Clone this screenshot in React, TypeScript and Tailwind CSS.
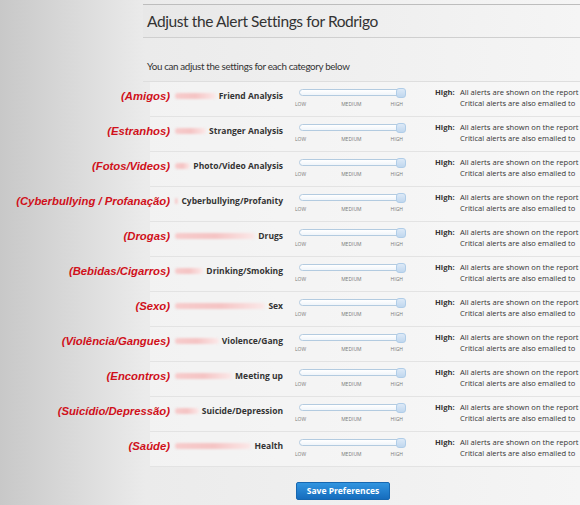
import React from "react";

const rows: [string, string][] = [
  ["(Amigos)", "Friend Analysis"],
  ["(Estranhos)", "Stranger Analysis"],
  ["(Fotos/Videos)", "Photo/Video Analysis"],
  ["(Cyberbullying / Profanação)", "Cyberbullying/Profanity"],
  ["(Drogas)", "Drugs"],
  ["(Bebidas/Cigarros)", "Drinking/Smoking"],
  ["(Sexo)", "Sex"],
  ["(Violência/Gangues)", "Violence/Gang"],
  ["(Encontros)", "Meeting up"],
  ["(Suicídio/Depressão)", "Suicide/Depression"],
  ["(Saúde)", "Health"],
];

function Slider() {
  return (
    <div className="flex w-[112px] shrink-0 flex-col">
      <div className="relative ml-[4px] h-[10px] w-[107px]">
        <div className="absolute left-0 right-[2px] top-[1px] h-[7px] rounded-full border border-[#b3cbe0] bg-gradient-to-b from-[#ffffff] to-[#f0f5fa]" />
        <div className="absolute right-0 top-0 h-[10px] w-[10px] rounded-[3px] border border-[#b0cde8] bg-gradient-to-b from-[#dce9f7] to-[#c0d7ee]" />
      </div>
      <div className="mt-[3px] flex w-[110px] justify-between text-[5px] leading-[6px] text-[#7a7a7a]">
        <span>LOW</span>
        <span className="ml-[6px]">MEDIUM</span>
        <span className="mr-[2px]">HIGH</span>
      </div>
    </div>
  );
}

export default function App() {
  return (
    <div
      className="h-[505px] w-[580px] overflow-hidden bg-gradient-to-r from-[#c8c8c8] via-[#ebebeb] via-25% to-[#f5f5f5]"
      style={{ fontFamily: '"Open Sans", "DejaVu Sans", sans-serif' }}
    >
      {/* header */}
      <div className="pt-[4px]">
        <div
          className="ml-[143px] h-[34px] border-y border-t-[#bdbdbd] border-b-[#cfcfcf] bg-gradient-to-r from-[#e8e8e8] to-[#f5f5f5] pl-[4px] text-[15.5px] leading-[32px] tracking-[-0.4px] text-[#333]"
          style={{ fontFamily: 'Lato, "Open Sans", sans-serif' }}
        >
          Adjust the Alert Settings for Rodrigo
        </div>
        <div
          className="ml-[143px] h-[44px] border-b border-[#dedede] pl-[4px] pt-[20px] text-[9.8px] leading-[16px] tracking-[-0.35px] text-[#333]"
          style={{ fontFamily: 'Lato, "Open Sans", sans-serif' }}
        >
          You can adjust the settings for each category below
        </div>
      </div>

      {/* rows */}
      <div>
        {rows.map(([red, label]) => (
          <div
            key={label}
            className="ml-[150px] flex h-[35px] items-center border-b border-[#e3e3e3] bg-[#fafafa]/50 pb-[6px]"
          >
            <div
              className="-ml-[150px] w-[170px] shrink-0 whitespace-nowrap text-right text-[11.3px] font-bold italic text-[#d0101a]"
              style={{ fontFamily: '"Liberation Sans", Arial, sans-serif' }}
            >
              {red}
            </div>
            <div className="ml-[5px] flex w-[108px] shrink-0 items-center">
              <div className="mr-[3px] h-[6px] flex-1 rounded-full bg-gradient-to-r from-[#f7cccc] via-[#f5c4c4] to-[#fbe9e9] blur-[1px]" />
              <span className="shrink-0 whitespace-nowrap text-[8.5px] font-bold text-[#333]">{label}</span>
            </div>
            <div className="ml-[12px] mt-[2px]">
              <Slider />
            </div>
            <div className="ml-[28px] mt-[4px] flex text-[7.6px] leading-[11px] text-[#333]">
              <span className="w-[25px] font-bold">High:</span>
              <div className="whitespace-nowrap">
                <div>All alerts are shown on the report</div>
                <div>Critical alerts are also emailed to</div>
              </div>
            </div>
          </div>
        ))}
      </div>

      <div className="flex pl-[296px] pt-[15px]">
        <button className="h-[18px] w-[94px] rounded-[2px] border border-[#1767b0] bg-gradient-to-b from-[#3195e0] to-[#166cbd] text-[8.5px] font-bold leading-[16px] text-white">
          Save Preferences
        </button>
      </div>
    </div>
  );
}
